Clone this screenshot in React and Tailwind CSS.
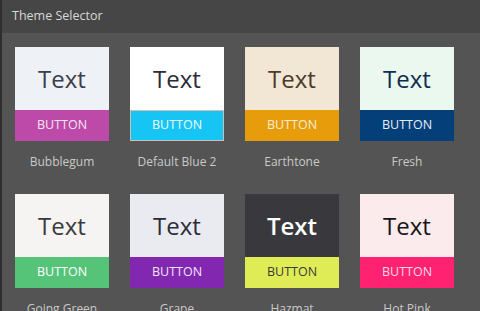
const themes = [
  { name: "Bubblegum", top: "bg-[#eef1f6]", text: "text-[#3a3f48]", btn: "bg-[#bd4aa8]", btnText: "text-[#f6e6f3]" },
  { name: "Default Blue 2", top: "bg-[#ffffff]", text: "text-[#2c2c3a]", btn: "bg-[#16c5f3] border border-[#cdbfb4]", btnText: "text-[#f4fbff]" },
  { name: "Earthtone", top: "bg-[#f2e6d4]", text: "text-[#4b3b2b]", btn: "bg-[#e79c0b]", btnText: "text-[#f7ecd6]" },
  { name: "Fresh", top: "bg-[#eaf8f0]", text: "text-[#0f2d4d]", btn: "bg-[#043f7a]", btnText: "text-[#e4eff8]" },
  { name: "Going Green", top: "bg-[#f5f4f3]", text: "text-[#3a3a3d]", btn: "bg-[#55c478]", btnText: "text-[#ffffff]" },
  { name: "Grape", top: "bg-[#e9ebf1]", text: "text-[#2c2c3a]", btn: "bg-[#8228b0]", btnText: "text-[#f0e6f8]" },
  { name: "Hazmat", top: "bg-[#38383d]", text: "text-[#ffffff] font-semibold", btn: "bg-[#e0ec55]", btnText: "text-[#3a3a3a]" },
  { name: "Hot Pink", top: "bg-[#fbebec]", text: "text-[#151515]", btn: "bg-[#ff2270]", btnText: "text-[#fcd9e6]" },
];

export default function App() {
  return (
    <div
      className="w-[480px] h-[311px] overflow-hidden flex bg-[#545454]"
      style={{ fontFamily: '"Open Sans", "Noto Sans", sans-serif' }}
    >
      <div className="w-[2px] bg-[#2e2e2e] shrink-0" />
      <div className="flex-1 flex flex-col">
        <div className="h-[33px] bg-[#464646] flex items-center pl-[10px] text-[12.5px] text-[#d8d8d8] shrink-0">
          Theme Selector
        </div>
        <div className="pl-[13px] pt-[14px] grid grid-cols-[94px_94px_94px_94px] gap-x-[21px]">
          {themes.map((t) => (
            <div key={t.name} className="flex flex-col items-center h-[147px]">
              <div className="w-[94px] flex flex-col">
                <div className={`h-[63px] flex items-center justify-center ${t.top}`}>
                  <span className={`text-[24px] leading-none ${t.text}`}>Text</span>
                </div>
                <div className={`h-[31px] flex items-center justify-center ${t.btn}`}>
                  <span className={`text-[12.5px] ${t.btnText}`}>BUTTON</span>
                </div>
              </div>
              <div className="mt-[12px] text-[12px] text-[#c9c9c9] whitespace-nowrap">{t.name}</div>
            </div>
          ))}
        </div>
      </div>
    </div>
  );
}
